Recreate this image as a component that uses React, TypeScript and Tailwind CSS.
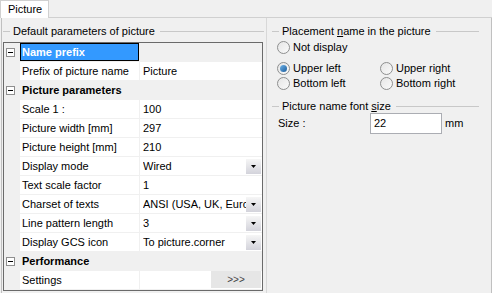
const font = "font-['Liberation_Sans',Arial,sans-serif]";

const Minus = () => (
  <div className="ml-[2px] flex h-[9px] w-[9px] items-center justify-center border border-[#8f8f8f] bg-white">
    <div className="h-[1px] w-[5px] bg-black" />
  </div>
);

const DropBtn = () => (
  <div className="flex h-[15px] w-[15px] shrink-0 items-center justify-center bg-gradient-to-b from-[#f6f6f6] to-[#d3d3db]">
    <svg width="5" height="3" viewBox="0 0 5 3">
      <path d="M0 0h5L2.5 3z" fill="#000" />
    </svg>
  </div>
);

type Prop = { label: string; value: string; drop?: boolean; more?: boolean };

const Category = ({ label, selected }: { label: string; selected?: boolean }) => (
  <div className="flex h-[18px] items-center">
    <div className="flex w-[16px] items-center">
      <Minus />
    </div>
    {selected ? (
      <div className="flex h-[18px] w-[119px] items-center border border-black bg-[#3399ff] pl-[1px] font-bold text-white">
        {label}
      </div>
    ) : (
      <div className="pl-[2px] font-bold">{label}</div>
    )}
  </div>
);

const PropRow = ({ label, value, drop, more }: Prop) => (
  <div className="flex h-[18px]">
    <div className="w-[16px]" />
    <div className="flex w-[119px] items-center bg-white pl-[2px] whitespace-nowrap">{label}</div>
    <div className="ml-[1px] flex w-[122px] items-center bg-white pl-[3px] pr-[1px]">
      <span className="min-w-0 flex-1 overflow-hidden whitespace-nowrap">{value}</span>
      {drop && <DropBtn />}
      {more && (
        <div className="flex h-[17px] w-[50px] items-center justify-center self-start bg-[#e6e6e6] text-[10px] text-[#444]">
          &gt;&gt;&gt;
        </div>
      )}
    </div>
  </div>
);

const Legend = ({ children, right }: { children: React.ReactNode; right: string }) => (
  <div className="flex items-center">
    <div className="h-[1px] w-[7px] bg-[#c8c8c8]" />
    <span className="ml-[3px] whitespace-nowrap">{children}</span>
    <div className={`ml-[5px] h-[1px] flex-1 bg-[#c8c8c8] ${right}`} />
  </div>
);

const Radio = ({ label, checked }: { label: string; checked?: boolean }) => (
  <div className="flex h-[13px] items-center">
    <div className="flex h-[13px] w-[13px] items-center justify-center rounded-full border border-[#8e8f8f] bg-gradient-to-br from-[#e6e6e6] to-[#fafafa]">
      {checked && <div className="h-[7px] w-[7px] rounded-full bg-gradient-to-br from-[#6fb3e8] to-[#1a5d9c]" />}
    </div>
    <span className="ml-[3px] whitespace-nowrap">{label}</span>
  </div>
);

export default function App() {
  const props1: Prop[] = [
    { label: "Scale 1 :", value: "100" },
    { label: "Picture width [mm]", value: "297" },
    { label: "Picture height [mm]", value: "210" },
    { label: "Display mode", value: "Wired", drop: true },
    { label: "Text scale factor", value: "1" },
    { label: "Charset of texts", value: "ANSI (USA, UK, Europe)", drop: true },
    { label: "Line pattern length", value: "3", drop: true },
    { label: "Display GCS icon", value: "To picture.corner", drop: true },
  ];

  return (
    <div className={`${font} h-[293px] w-[492px] overflow-hidden bg-[#f0f0f0] text-[11px] text-black`}>
      <div className="flex h-[18px] items-end">
        <div className="flex h-[18px] w-[49px] items-center border-x border-t border-[#d0d0d0] bg-white pl-[7px]">
          Picture
        </div>
        <div className="h-[1px] flex-1 bg-[#d0d0d0]" />
      </div>

      <div className="ml-[1px] flex h-[275px] border-x border-[#c0c0c0]">
        {/* left panel */}
        <div className="w-[265px] border-r border-[#d8d8d8]">
          <div className="flex h-[24px] items-center pt-[2px] pl-[1px]">
            <div className="flex-1">
              <Legend right="mr-[2px]">Default parameters of picture</Legend>
            </div>
          </div>
          <div className="ml-[1px] h-[249px] w-[260px] border border-[#6a6a6a] bg-[#f0f0f0]">
            <div className="flex flex-col gap-[1px]">
              <Category label="Name prefix" selected />
              <PropRow label="Prefix of picture name" value="Picture" />
              <Category label="Picture parameters" />
              {props1.map((p) => (
                <PropRow key={p.label} {...p} />
              ))}
              <Category label="Performance" />
              <PropRow label="Settings" value="" more />
            </div>
          </div>
        </div>

        {/* right panel */}
        <div className="flex-1 pl-[5px]">
          <div className="flex h-[23px] items-center pt-[3px]">
            <div className="flex-1">
              <Legend right="mr-[12px]">
                Placement <span className="underline">n</span>ame in the picture
              </Legend>
            </div>
          </div>
          <div className="pl-[5px]">
            <Radio label="Not display" />
            <div className="mt-[8px] grid grid-cols-[103px_1fr] gap-y-[2px]">
              <Radio label="Upper left" checked />
              <Radio label="Upper right" />
              <Radio label="Bottom left" />
              <Radio label="Bottom right" />
            </div>
          </div>
          <div className="mt-[10px] flex h-[12px] items-center">
            <div className="flex-1">
              <Legend right="mr-[12px]">
                Picture name font <span className="underline">s</span>ize
              </Legend>
            </div>
          </div>
          <div className="mt-[1px] flex h-[21px] items-center pl-[6px]">
            <span className="w-[92px]">Size :</span>
            <div className="flex h-[21px] w-[72px] items-center border border-[#abadb3] bg-white pl-[3px]">22</div>
            <span className="ml-[3px]">mm</span>
          </div>
        </div>
      </div>
    </div>
  );
}
